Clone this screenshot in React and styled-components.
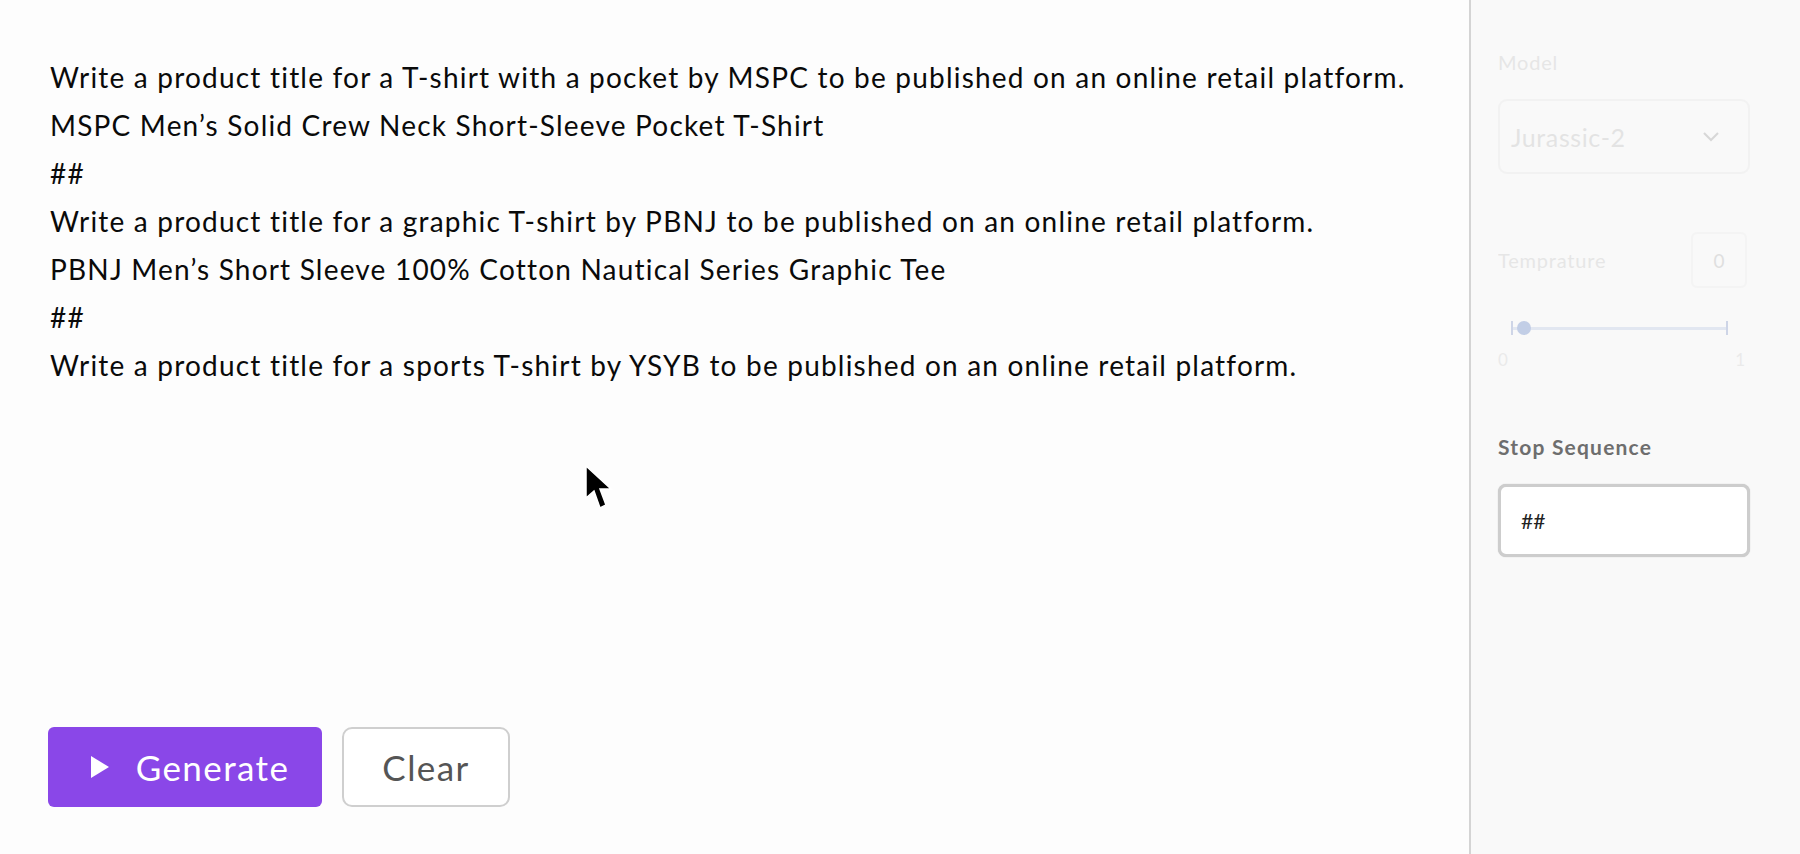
import React from 'react'
import styled, { createGlobalStyle } from 'styled-components'

const GlobalStyle = createGlobalStyle`
  *, *::before, *::after {
    box-sizing: border-box;
  }
  html, body {
    margin: 0;
    padding: 0;
    background: #fdfdfd;
  }
  body {
    font-family: Lato, 'Noto Sans', sans-serif;
  }
`

const Layout = styled.div`
  display: flex;
  width: 1800px;
  height: 854px;
  overflow: hidden;
`

const Editor = styled.main`
  position: relative;
  flex: 1;
  display: flex;
  flex-direction: column;
  justify-content: space-between;
  padding: 53px 0 47px 50px;
  background: #fdfdfd;
`

const Prompt = styled.div`
  font-size: 28px;
  line-height: 48px;
  color: #0a0a0a;
  letter-spacing: 1.2px;
`

const PromptLine = styled.div`
  white-space: nowrap;
`

const Actions = styled.div`
  display: flex;
  gap: 20px;
  margin-left: -2px;
`

const Button = styled.button`
  display: flex;
  align-items: center;
  justify-content: center;
  gap: 27px;
  height: 80px;
  padding: 0 0 0 ${p => (p.$primary ? 10 : 0)}px;
  font-family: Lato, 'Noto Sans', sans-serif;
  font-size: 35px;
  letter-spacing: 1.4px;
  border-radius: ${p => (p.$primary ? '6px' : '10px')};
  border: ${p => (p.$primary ? 'none' : '2px solid #cfcfcf')};
  background: ${p => (p.$primary ? '#8a47e8' : '#ffffff')};
  color: ${p => (p.$primary ? '#ffffff' : '#555555')};
  width: ${p => p.$width}px;
`

const Cursor = styled.svg`
  position: absolute;
  left: 584px;
  top: 464px;
`

const Sidebar = styled.aside`
  width: 331px;
  border-left: 2px solid #d4d4d4;
  background: #f9f9f9;
  padding: 51px 50px 0 27px;
  display: flex;
  flex-direction: column;
`

const Faded = styled.div`
  opacity: 0.35;
  display: flex;
  flex-direction: column;
`

const Label = styled.div`
  font-size: ${p => (p.$strong ? 21 : 20)}px;
  line-height: 22px;
  color: ${p => (p.$strong ? '#6e6e6e' : '#c4c4c4')};
  font-weight: ${p => (p.$strong ? 700 : 400)};
  letter-spacing: ${p => (p.$strong ? 1.2 : 0.8)}px;
`

const Select = styled.div`
  margin-top: 26px;
  height: 75px;
  border: 2px solid #e6e6e6;
  border-radius: 9px;
  display: flex;
  align-items: center;
  justify-content: space-between;
  padding: 0 29px 0 11px;
  font-size: 25px;
  letter-spacing: 0.6px;
  color: #bdbdbd;
`

const Row = styled.div`
  display: flex;
  align-items: center;
  justify-content: space-between;
  margin-top: ${p => p.$top || 0}px;
`

const NumberBox = styled.div`
  width: 56px;
  height: 56px;
  margin-right: 3px;
  border: 2px solid #ececec;
  border-radius: 6px;
  display: flex;
  align-items: center;
  justify-content: center;
  font-size: 19px;
  color: #b0b0b0;
`

const Slider = styled.div`
  position: relative;
  margin: 33px 22px 0 13px;
  height: 14px;
`

const Track = styled.div`
  position: absolute;
  left: 0;
  right: 0;
  top: 6px;
  height: 3px;
  background: #b9c6e3;
`

const Tick = styled.div`
  position: absolute;
  top: 0;
  ${p => p.$side}: 0;
  width: 2px;
  height: 14px;
  background: #7f95c8;
`

const Thumb = styled.div`
  position: absolute;
  left: 6px;
  top: 0;
  width: 14px;
  height: 14px;
  border-radius: 50%;
  background: #5f7fc4;
`

const Scale = styled.div`
  display: flex;
  justify-content: space-between;
  margin: 15px 5px 0 0;
  font-size: 17px;
  line-height: 20px;
  color: #d0d0d0;
`

const StopInput = styled.div`
  margin-top: 26px;
  height: 73px;
  border: 3px solid #cdcdcd;
  border-radius: 8px;
  background: #ffffff;
  display: flex;
  align-items: center;
  padding-left: 20px;
  font-size: 21px;
  color: #222;
  box-shadow: 0 0 1px #bbb;
`

const lines = [
  'Write a product title for a T-shirt with a pocket by MSPC to be published on an online retail platform.',
  'MSPC Men’s Solid Crew Neck Short-Sleeve Pocket T-Shirt',
  '##',
  'Write a product title for a graphic T-shirt by PBNJ to be published on an online retail platform.',
  'PBNJ Men’s Short Sleeve 100% Cotton Nautical Series Graphic Tee',
  '##',
  'Write a product title for a sports T-shirt by YSYB to be published on an online retail platform.',
]

export default function App() {
  return (
    <>
      <GlobalStyle />
      <Layout>
        <Editor>
          <Prompt>
            {lines.map((l, i) => (
              <PromptLine key={i}>{l}</PromptLine>
            ))}
          </Prompt>
          <Actions>
            <Button $primary $width={274}>
              <svg width="18" height="22" viewBox="0 0 18 22">
                <path d="M0 0 L18 11 L0 22 Z" fill="#fff" />
              </svg>
              Generate
            </Button>
            <Button $width={168}>Clear</Button>
          </Actions>
          <Cursor width="30" height="48" viewBox="0 0 30 48">
            <path d="M2 2 L2 34 L10 27 L16 44 L22 41 L16 25 L27 25 Z" fill="#000" stroke="#fff" strokeWidth="1.5" />
          </Cursor>
        </Editor>
        <Sidebar>
          <Faded>
            <Label>Model</Label>
            <Select>
              Jurassic-2
              <svg width="16" height="10" viewBox="0 0 16 10">
                <path d="M1 1 L8 8 L15 1" fill="none" stroke="#9a9a9a" strokeWidth="2" />
              </svg>
            </Select>
            <Row $top={58}>
              <Label>Temprature</Label>
              <NumberBox>0</NumberBox>
            </Row>
            <Slider>
              <Track />
              <Tick $side="left" />
              <Tick $side="right" />
              <Thumb />
            </Slider>
            <Scale>
              <span>0</span>
              <span>1</span>
            </Scale>
          </Faded>
          <Row $top={66}>
            <Label $strong>Stop Sequence</Label>
          </Row>
          <StopInput>##</StopInput>
        </Sidebar>
      </Layout>
    </>
  )
}
